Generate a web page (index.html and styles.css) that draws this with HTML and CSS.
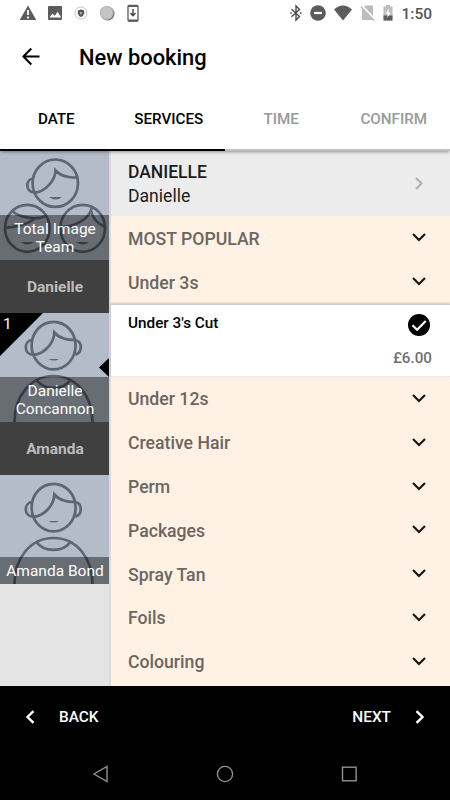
FILE: index.html
```
<!DOCTYPE html>
<html lang="en">
<head>
    <meta charset="UTF-8">
    <meta name="viewport" content="width=device-width, initial-scale=1.0">
    <title>New booking</title>
    <link rel="stylesheet" href="styles.css">
</head>
<body>
    <!-- Shared shapes -->
    <svg class="defs">
        <symbol id="down" viewBox="0 0 24 24"><path d="M6 9l6 6 6-6" fill="none" stroke="currentColor" stroke-width="2.1"/></symbol>
        <symbol id="person" viewBox="0 0 109 109">
            <g fill="none" stroke="#5d6673" stroke-width="2.7">
                <ellipse cx="53.6" cy="32.6" rx="22" ry="23.8"/>
                <path d="M31.5 27.2C24 28 23.500 41 32.500 41.700C43 42 54 31 54.300 19.500C59 25 68 27.500 75.500 26.800"/>
                <path d="M76 27.200C82.500 29 82.500 40.500 75 41.500"/>
                <path d="M14.500 110C14 84 30 63 53.500 63S93 84 92.500 110"/>
                <path d="M36.500 67C44 77.500 63 77.500 70.500 67"/>
            </g>
            <path d="M48.500 46h10.500q-5 3-10.500 0z" fill="#5d6673"/>
        </symbol>
    </svg>

    <!-- Status bar -->
    <div class="status-bar">
        <div class="status-left">
            <svg width="18" height="18" viewBox="0 0 18 18"><path d="M9 1.500L17.300 16H.7z" fill="#5c5c5c"/><path d="M9 6v5M9 12.500v2" stroke="#fff" stroke-width="1.800"/></svg>
            <svg width="16" height="18" viewBox="0 0 16 18"><rect x="1" y="2" width="14" height="14" rx="1" fill="#5c5c5c"/><path d="M2.500 13.500l3-4 2.200 2.300 3-4 3.500 5.700z" fill="#fff"/></svg>
            <svg width="14" height="18" viewBox="0 0 14 18"><circle cx="7" cy="9" r="6" fill="#fff" stroke="#b5b5b5" stroke-width=".8"/><path d="M7 5.500l3.200 1v2.800Q9.800 12 7 13 4.200 12 3.800 9.300V6.500z" fill="#555"/><path d="M5.500 8.200h3L7 11z" fill="#bbb"/></svg>
            <svg width="16" height="18" viewBox="0 0 16 18"><circle cx="8.600" cy="9.600" r="7" fill="#777"/><circle cx="7.600" cy="8.800" r="6.900" fill="#c4c4c4"/><circle cx="7.600" cy="8.800" r="6.200" fill="none" stroke="#999" stroke-dasharray="1 1.400"/></svg>
            <svg width="12" height="18" viewBox="0 0 12 18"><rect x="1" y="1.500" width="10" height="15.500" rx="1" fill="#fff" stroke="#5c5c5c" stroke-width="1.300"/><path d="M1 2h10M1 16.500h10" stroke="#5c5c5c" stroke-width="2"/><path d="M6 5v6M3.500 9L6 11.700 8.500 9" fill="none" stroke="#444" stroke-width="1.400"/></svg>
        </div>
        <div class="status-right">
            <svg width="12" height="18" viewBox="0 0 12 18"><path d="M1.500 5.200l8 7.400L6 16V2l3.500 3.400-8 7.400" fill="none" stroke="#4c4c4c" stroke-width="1.400"/><path d="M.3 9h1.500M10 9h1.500" stroke="#4c4c4c" stroke-width="1.500"/></svg>
            <svg width="16" height="18" viewBox="0 0 16 18"><circle cx="8" cy="9" r="7.800" fill="#5c5c5c"/><path d="M4 9h8" stroke="#fff" stroke-width="2.200"/></svg>
            <svg width="18" height="18" viewBox="0 0 18 18"><path d="M0 5.500Q9-2.500 18 5.500L9 16.500z" fill="#5c5c5c"/></svg>
            <svg width="15" height="18" viewBox="0 0 15 18"><path d="M3 4l2.500-2.500H13V16H2V5z" fill="#bdbdbd"/><path d="M1 .8l14 15" stroke="#fff" stroke-width="2"/><path d="M.8 2.500l13.500 14" stroke="#bdbdbd" stroke-width="1.300"/></svg>
            <svg width="10" height="18" viewBox="0 0 10 18"><path d="M3 1h4v1.500h2.500V16.500H.5v-14H3z" fill="#bdbdbd"/><path d="M.5 11.500h9v5h-9z" fill="#5c5c5c"/><path d="M5.700 4.500L2.500 9.800h2v4l3-5.300h-2z" fill="#fff"/></svg>
            <span class="clock">1:50</span>
        </div>
    </div>

    <header class="toolbar">
        <svg width="20" height="20" viewBox="0 0 20 20"><path d="M18.500 9.500H3M10.300 1.500L2.400 9.500l7.900 8" fill="none" stroke="#000" stroke-width="2"/></svg>
        <h1>New booking</h1>
    </header>

    <nav class="tabs">
        <div class="tab done">DATE</div>
        <div class="tab done">SERVICES</div>
        <div class="tab">TIME</div>
        <div class="tab">CONFIRM</div>
    </nav>

    <main class="content">
        <!-- Staff list -->
        <aside class="staff">
            <div class="card">
                <svg class="avatar" viewBox="0 0 109 109">
                    <g fill="none" stroke="#5d6673" stroke-width="2.700">
                        <ellipse cx="55.300" cy="32.200" rx="22.700" ry="23.700"/>
                        <path d="M33 27.500C25.500 28.500 25 40.500 34 41.500C45 41.500 55.500 29 55.500 19.500C60 24.500 69 27.300 77 26.300"/>
                        <ellipse cx="27.300" cy="77.300" rx="22.300" ry="23.500"/>
                        <path d="M12.500 60.500C20 66 35 70 46 65M5.500 77C16 76 28 73 36 67"/>
                        <ellipse cx="82.700" cy="77.300" rx="22.300" ry="23.500"/>
                        <path d="M92 56.500C89 69 74 76 60.500 76M91 60C93 68 98 73 105 76"/>
                    </g>
                    <path d="M49 46h13q-6.500 5-13 0zM21 91h13q-6.500 5-13 0zM76 91h13q-6.500 5-13 0z" fill="#5d6673"/>
                </svg>
                <div class="caption">Total Image<br>Team</div>
            </div>
            <div class="group">Danielle</div>
            <div class="card">
                <svg class="avatar"><use href="#person"/></svg>
                <div class="count"><span>1</span></div>
                <div class="pointer"></div>
                <div class="caption">Danielle<br>Concannon</div>
            </div>
            <div class="group">Amanda</div>
            <div class="card">
                <svg class="avatar"><use href="#person"/></svg>
                <div class="caption single">Amanda Bond</div>
            </div>
        </aside>

        <!-- Services of the selected person -->
        <section class="services">
            <div class="selected">
                <div>
                    <h2>DANIELLE</h2>
                    <p>Danielle</p>
                </div>
                <svg width="16" height="16" viewBox="0 0 16 16"><path d="M5 2l5.500 5.500L5 13" fill="none" stroke="#adadad" stroke-width="2"/></svg>
            </div>
            <div class="category">MOST POPULAR<svg class="down"><use href="#down"/></svg></div>
            <div class="category">Under 3s<svg class="down"><use href="#down"/></svg></div>
            <div class="service">
                <div class="service-name">
                    <span>Under 3's Cut</span>
                    <svg width="24" height="24" viewBox="0 0 24 24"><circle cx="12" cy="12" r="11" fill="#000"/><path d="M5.500 12.300l4.600 4.500L18.700 8" fill="none" stroke="#fff" stroke-width="2.200"/></svg>
                </div>
                <div class="price">£6.00</div>
            </div>
            <div class="category">Under 12s<svg class="down"><use href="#down"/></svg></div>
            <div class="category">Creative Hair<svg class="down"><use href="#down"/></svg></div>
            <div class="category">Perm<svg class="down"><use href="#down"/></svg></div>
            <div class="category">Packages<svg class="down"><use href="#down"/></svg></div>
            <div class="category">Spray Tan<svg class="down"><use href="#down"/></svg></div>
            <div class="category">Foils<svg class="down"><use href="#down"/></svg></div>
            <div class="category">Colouring<svg class="down"><use href="#down"/></svg></div>
        </section>
    </main>

    <footer class="actions">
        <div class="action">
            <svg width="16" height="16" viewBox="0 0 16 16"><path d="M11.500 2.200L5.500 8l6 5.800" fill="none" stroke="#fff" stroke-width="2.400"/></svg>
            <span>BACK</span>
        </div>
        <div class="action">
            <span>NEXT</span>
            <svg width="16" height="16" viewBox="0 0 16 16"><path d="M4.500 2.200L10.500 8l-6 5.800" fill="none" stroke="#fff" stroke-width="2.400"/></svg>
        </div>
    </footer>

    <div class="android-nav">
        <svg width="20" height="20" viewBox="0 0 20 20"><path d="M16 2.500v15L3 10z"/></svg>
        <svg width="20" height="20" viewBox="0 0 20 20"><circle cx="10" cy="10" r="7.600"/></svg>
        <svg width="20" height="20" viewBox="0 0 20 20"><rect x="3.500" y="3.200" width="13.600" height="13.600"/></svg>
    </div>
</body>
</html>
```
FILE: styles.css
```
* {
    box-sizing: border-box;
}
body {
    font-family: Roboto, sans-serif;
    margin: 0;
    width: 450px;
    height: 800px;
    overflow: hidden;
    display: flex;
    flex-direction: column;
    background: #fff;
}
svg {
    display: block;
    flex: none;
}
.defs {
    position: absolute;
    width: 0;
    height: 0;
}
h1, h2, p {
    margin: 0;
}
.status-bar {
    height: 26px;
    padding: 0 18px 0 19px;
    display: flex;
    align-items: center;
    justify-content: space-between;
}
.status-left {
    display: flex;
    align-items: center;
    gap: 11px;
}
.status-right {
    display: flex;
    align-items: center;
    gap: 8px;
}
.status-left svg:nth-child(2) {
    margin-left: -1px;
}
.status-left svg:nth-child(5) {
    margin-left: 1px;
}
.clock {
    font-size: 15.5px;
    font-weight: 500;
    color: #555;
    padding-top: 1px;
}
.toolbar {
    height: 62px;
    padding-left: 21px;
    display: flex;
    align-items: center;
    gap: 38px;
}
.toolbar h1 {
    font-size: 21.9px;
    font-weight: 500;
}
.tabs {
    height: 63px;
    flex: none;
    display: flex;
    box-shadow: 0 2px 3px -1px rgba(0, 0, 0, 0.4);
    position: relative;
    z-index: 1;
    background: #fff;
}
.tab {
    flex: 1;
    padding-top: 1px;
    display: flex;
    align-items: center;
    justify-content: center;
    font-size: 15.2px;
    font-weight: 500;
    color: #999;
    border-bottom: 2px solid #c2c2c2;
}
.tab.done {
    color: #000;
    border-color: #000;
}
.content {
    height: 535px;
    flex: none;
    display: flex;
    overflow: hidden;
}
.staff {
    width: 111px;
    background: #e4e4e4;
    border-right: 2px solid #dadadc;
}
.card {
    height: 109px;
    position: relative;
    overflow: hidden;
    background: #b4bcc9;
}
.avatar {
    width: 109px;
    height: 109px;
}
.caption {
    position: absolute;
    left: 0;
    right: 0;
    bottom: 0;
    height: 45px;
    padding: 5px 0 0 1px;
    background: rgba(0, 0, 0, 0.42);
    color: #fff;
    font-size: 15.5px;
    line-height: 18px;
    text-align: center;
    white-space: nowrap;
}
.caption.single {
    height: 27px;
}
.group {
    height: 53px;
    padding-left: 1px;
    display: flex;
    align-items: center;
    justify-content: center;
    background: #404040;
    color: #bdbdbd;
    font-size: 15.5px;
    font-weight: 700;
}
.count {
    position: absolute;
    left: 0;
    top: 0;
    width: 43px;
    height: 43px;
    background: #000;
    clip-path: polygon(0 0, 100% 0, 0 100%);
    color: #fff;
    font-size: 15.5px;
    padding: 2px 3px;
}
.pointer {
    position: absolute;
    right: 0;
    top: 45px;
    width: 10px;
    height: 19px;
    background: #000;
    clip-path: polygon(100% 0, 100% 100%, 0 50%);
}
.services {
    flex: 1;
    background: #fff2e4;
}
.selected {
    height: 65px;
    padding: 1px 23px 0 17px;
    display: flex;
    align-items: center;
    justify-content: space-between;
    background: #ececec;
    color: #1c1c1c;
}
.selected h2 {
    font-size: 17.5px;
    font-weight: 500;
    line-height: 24px;
}
.selected p {
    font-size: 17.6px;
    line-height: 24px;
}
.category {
    height: 43.8px;
    padding: 2px 19px 0 17px;
    display: flex;
    align-items: center;
    justify-content: space-between;
    font-size: 17.65px;
    font-weight: 500;
    color: #6b6661;
}
.down {
    width: 24px;
    height: 24px;
    margin-bottom: 3px;
    color: #151515;
}
.service {
    height: 73px;
    padding: 9px 18px 0 17px;
    background: #fff;
    border-top: 1px solid #cfcac6;
    border-bottom: 1px solid #ece8e5;
    box-shadow: 0 -1px 2px rgba(0, 0, 0, 0.2);
}
.service-name {
    display: flex;
    justify-content: space-between;
    height: 35px;
    font-size: 15.3px;
    font-weight: 500;
}
.service-name svg {
    margin: -1px 1px 0 0;
}
.price {
    text-align: right;
    font-size: 15.2px;
    font-weight: 500;
    color: #707070;
}
.actions {
    height: 62px;
    padding: 0 22px;
    display: flex;
    align-items: center;
    justify-content: space-between;
    background: #000;
    color: #fff;
    font-size: 15.4px;
    font-weight: 500;
}
.action {
    display: flex;
    align-items: center;
    gap: 21px;
}
.android-nav {
    flex: 1;
    padding: 0 91px;
    display: flex;
    align-items: center;
    justify-content: space-between;
    background: #000;
}
.android-nav svg {
    fill: none;
    stroke: #909090;
    stroke-width: 1.4;
}
```
